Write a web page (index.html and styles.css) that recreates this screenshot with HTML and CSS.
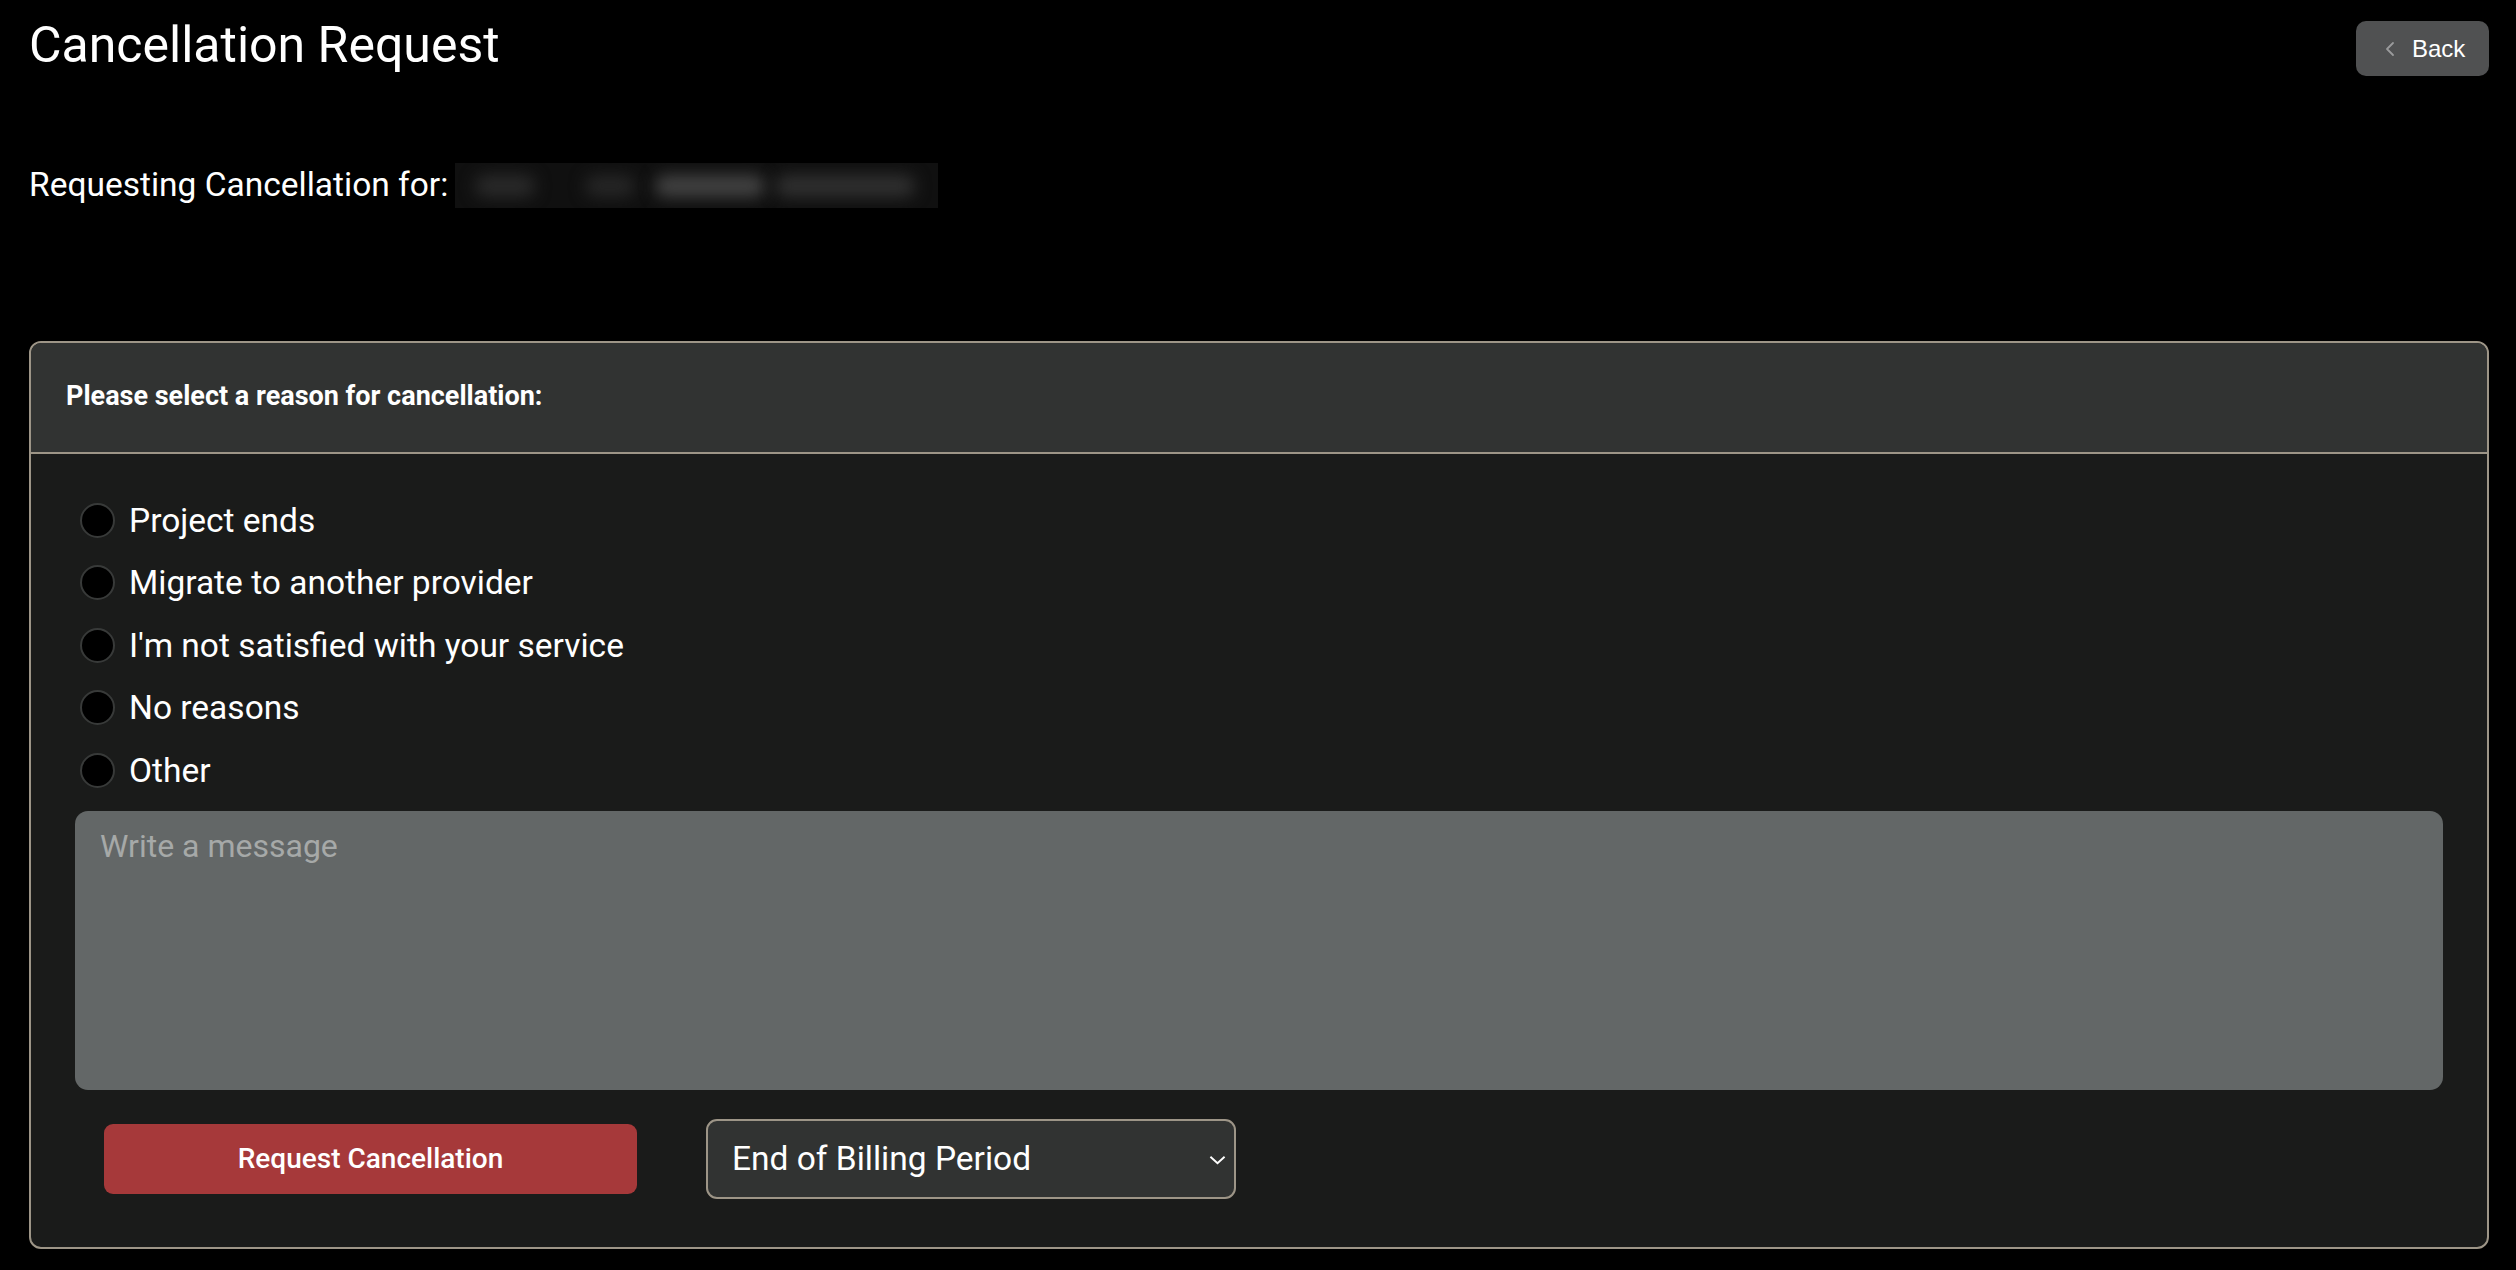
FILE: index.html
```html
<!DOCTYPE html>
<html lang="en">
<head>
<meta charset="utf-8">
<title>Cancellation Request</title>
<link rel="stylesheet" href="styles.css">
</head>
<body>
<div class="page">
  <div class="topbar">
    <h1 class="title">Cancellation Request</h1>
    <button class="back-btn" type="button">
      <svg class="back-icon" viewBox="0 0 12 16" width="12" height="16" aria-hidden="true"><path d="M9 2 L3 8 L9 14" fill="none" stroke="#9a9b9c" stroke-width="1.8" stroke-linecap="round" stroke-linejoin="round"/></svg>
      <span>Back</span>
    </button>
  </div>

  <div class="requesting">
    <span class="req-label">Requesting Cancellation for:</span>
    <span class="redacted"><span class="blob b1"></span><span class="blob b2"></span><span class="blob b3"></span><span class="blob b4"></span></span>
  </div>

  <div class="card">
    <div class="card-header">Please select a reason for cancellation:</div>
    <div class="card-body">
      <div class="reasons">
        <label class="reason"><input type="radio" name="reason"><span>Project ends</span></label>
        <label class="reason"><input type="radio" name="reason"><span>Migrate to another provider</span></label>
        <label class="reason"><input type="radio" name="reason"><span>I'm not satisfied with your service</span></label>
        <label class="reason"><input type="radio" name="reason"><span>No reasons</span></label>
        <label class="reason"><input type="radio" name="reason"><span>Other</span></label>
      </div>
      <textarea class="message" placeholder="Write a message"></textarea>
      <div class="actions">
        <button class="cancel-btn" type="button">Request Cancellation</button>
        <div class="select-wrap">
          <select class="period">
            <option>End of Billing Period</option>
            <option>Immediate</option>
          </select>
          <svg class="select-arrow" viewBox="0 0 18 10" width="18" height="10" aria-hidden="true"><path d="M1.5 1.5 L9 8.5 L16.5 1.5" fill="none" stroke="#ffffff" stroke-width="2"/></svg>
        </div>
      </div>
    </div>
  </div>
</div>
</body>
</html>
```

FILE: styles.css
```css
* { box-sizing: border-box; }
html, body { margin: 0; padding: 0; background: #000; }
body {
  font-family: Roboto, "Noto Sans", "Liberation Sans", sans-serif;
  color: #fff;
}
.page {
  padding: 0 27px 0 29px;
}
.topbar {
  display: flex;
  justify-content: space-between;
  align-items: flex-start;
  padding-top: 12px;
}
.title {
  margin: 0;
  font-size: 50px;
  font-weight: 400;
  line-height: 66px;
}
.back-btn {
  margin-top: 9px;
  display: flex;
  align-items: center;
  gap: 16px;
  width: 133px;
  height: 55px;
  padding: 0 0 0 28px;
  border: none;
  border-radius: 10px;
  background: #505152;
  color: #fff;
  font-family: "Liberation Sans", Arial, sans-serif;
  font-size: 24px;
}
.back-icon { width: 12px; height: 16px; }
.requesting {
  display: flex;
  align-items: center;
  margin-top: 84px;
  height: 46px;
}
.req-label {
  font-size: 33.5px;
  line-height: 46px;
}
.redacted {
  position: relative;
  display: block;
  width: 483px;
  height: 45px;
  margin-left: 7px;
  background: #101010;
  overflow: hidden;
}
.blob {
  position: absolute;
  top: 12px;
  height: 22px;
  border-radius: 11px;
  filter: blur(8px);
}
.b1 { left: 20px; width: 60px; background: #2a2a2a; }
.b2 { left: 130px; width: 50px; background: #262626; }
.b3 { left: 200px; width: 110px; background: #434343; }
.b4 { left: 320px; width: 140px; background: #303030; }

.card {
  margin-top: 133px;
  border: 2px solid #9d9587;
  border-radius: 12px;
  background: #1a1b1a;
  overflow: hidden;
}
.card-header {
  height: 111px;
  display: flex;
  align-items: center;
  padding: 0 0 4px 35px;
  background: #313332;
  border-bottom: 2px solid #9d9587;
  font-size: 27px;
  font-weight: 700;
}
.card-body {
  padding: 35px 44px 48px 44px;
}
.reasons {
  display: flex;
  flex-direction: column;
  padding-left: 5px;
}
.reason {
  display: flex;
  align-items: center;
  gap: 14px;
  height: 62.5px;
  font-size: 33.5px;
}
.reason input {
  appearance: none;
  -webkit-appearance: none;
  margin: 0;
  width: 35px;
  height: 35px;
  border-radius: 50%;
  background: #000;
  border: 2px solid #383a39;
}
.message {
  display: block;
  width: 100%;
  height: 279px;
  margin-top: 9px;
  border: none;
  border-radius: 13px;
  background: #636767;
  color: #fff;
  font-family: inherit;
  font-size: 32px;
  padding: 16px 25px;
  resize: none;
}
.message::placeholder { color: #a6a9a8; }
.actions {
  display: flex;
  align-items: center;
  gap: 69px;
  margin-top: 29px;
  padding-left: 29px;
}
.cancel-btn {
  width: 533px;
  height: 70px;
  border: none;
  border-radius: 9px;
  background: #a6393a;
  color: #fff;
  font-family: inherit;
  font-size: 28px;
  font-weight: 500;
}
.select-wrap {
  position: relative;
  width: 530px;
  height: 80px;
}
.period {
  appearance: none;
  -webkit-appearance: none;
  width: 100%;
  height: 100%;
  border: 2px solid #9d9587;
  border-radius: 11px;
  background: #313332;
  color: #fff;
  font-family: inherit;
  font-size: 33.5px;
  padding: 0 50px 0 24px;
}
.select-arrow {
  position: absolute;
  right: 10px;
  top: 36px;
  width: 17px;
  height: 10px;
  pointer-events: none;
}
```
